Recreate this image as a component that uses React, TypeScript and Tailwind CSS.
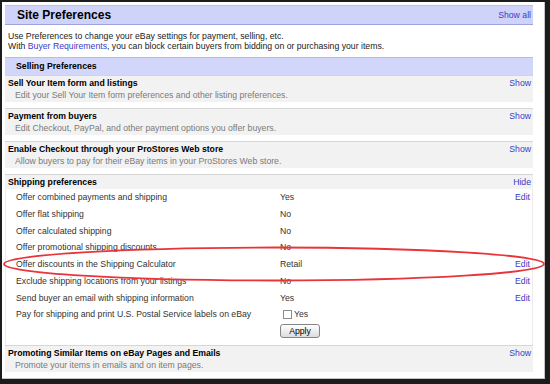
import React from "react";

const LINK = "text-[#3b3bc6]";

function Section({ title, desc, first }: { title: string; desc: string; first?: boolean }) {
  return (
    <div className={first ? "" : "mt-[6px] border-t border-[#d6d6d6]"}>
      <div className="bg-[#f2f2f2] py-[1px]">
        <div className="flex h-[12px] items-center justify-between pl-[3px] pr-[2px]">
          <span className="font-bold text-black">{title}</span>
          <span className={LINK}>Show</span>
        </div>
        <div className="flex h-[12px] items-center pl-[10px] text-[#7a7a7a]">{desc}</div>
      </div>
    </div>
  );
}

const rows: { label: string; value: string; edit: boolean }[] = [
  { label: "Offer combined payments and shipping", value: "Yes", edit: true },
  { label: "Offer flat shipping", value: "No", edit: false },
  { label: "Offer calculated shipping", value: "No", edit: false },
  { label: "Offer promotional shipping discounts", value: "No", edit: false },
  { label: "Offer discounts in the Shipping Calculator", value: "Retail", edit: true },
  { label: "Exclude shipping locations from your listings", value: "No", edit: true },
  { label: "Send buyer an email with shipping information", value: "Yes", edit: true },
];

export default function App() {
  return (
    <div
      className="h-[384px] w-[550px] bg-[#1c1c1c] pb-[5px] pl-[2px] pr-[5px] pt-[2px] text-[8.7px] leading-none"
      style={{ fontFamily: '"Liberation Sans", Arial, sans-serif' }}
    >
      <div className="relative h-full border-b border-r border-[#c4c4c4] bg-white pl-[3px] pr-[10px] pt-[3px]">
        <div className="w-[528px]">
          {/* Header */}
          <div className="flex h-[20px] items-center justify-between border-b border-t border-b-[#9ea4dc] border-t-[#bcc1ea] bg-[#cfd3fa] pl-[12px] pr-[2px]">
            <span className="text-[12px] font-bold text-black">Site Preferences</span>
            <span className={LINK}>Show all</span>
          </div>

          {/* Intro */}
          <div className="mt-[6px] pl-[3px] text-[#222]">
            <div className="flex h-[10px] items-center">
              Use Preferences to change your eBay settings for payment, selling, etc.
            </div>
            <div className="flex h-[10px] items-center">
              <span>With&nbsp;</span>
              <span className={LINK}>Buyer Requirements</span>
              <span>, you can block certain buyers from bidding on or purchasing your items.</span>
            </div>
          </div>

          {/* Selling Preferences bar */}
          <div className="mt-[6px] flex h-[19px] items-center border-b border-t border-b-[#f3d77c] border-t-[#b9bdd6] bg-[#d2d6fa] pl-[11px]">
            <span className="font-bold text-black">Selling Preferences</span>
          </div>

          <Section
            first
            title="Sell Your Item form and listings"
            desc="Edit your Sell Your Item form preferences and other listing preferences."
          />
          <Section
            title="Payment from buyers"
            desc="Edit Checkout, PayPal, and other payment options you offer buyers."
          />
          <Section
            title="Enable Checkout through your ProStores Web store"
            desc="Allow buyers to pay for their eBay items in your ProStores Web store."
          />

          {/* Shipping preferences */}
          <div className="mt-[6px] border-t border-[#d6d6d6]">
            <div className="flex h-[14px] items-center justify-between bg-[#f2f2f2] pl-[3px] pr-[2px] pt-[1px]">
              <span className="font-bold text-black">Shipping preferences</span>
              <span className={LINK}>Hide</span>
            </div>
            <div className="border-l border-r border-[#ececec] pb-[7px] text-[#333]">
              {rows.map((r) => (
                <div key={r.label} className="flex h-[16.75px] items-center">
                  <div className="w-[274px] pl-[10px]">{r.label}</div>
                  <div className="flex-1">{r.value}</div>
                  {r.edit && <div className={`pr-[2px] ${LINK}`}>Edit</div>}
                </div>
              ))}
              <div className="flex items-start">
                <div className="flex h-[16.75px] w-[274px] items-center pl-[10px]">
                  Pay for shipping and print U.S. Postal Service labels on eBay
                </div>
                <div className="flex-1">
                  <div className="flex h-[16.75px] items-center">
                    <span className="ml-[3px] inline-block h-[9px] w-[9px] border border-[#8c8c8c] bg-white" />
                    <span className="ml-[2px]">Yes</span>
                  </div>
                  <button className="mt-[1px] flex h-[14px] w-[40px] items-center justify-center rounded-[3px] border border-[#858585] bg-gradient-to-b from-white to-[#dcdcdc] text-[8.7px] text-black">
                    Apply
                  </button>
                </div>
              </div>
            </div>
          </div>

          <div className="border-t border-[#d6d6d6]">
            <div className="bg-[#f2f2f2] py-[1px]">
              <div className="flex h-[12px] items-center justify-between pl-[3px] pr-[2px]">
                <span className="font-bold text-black">Promoting Similar Items on eBay Pages and Emails</span>
                <span className={LINK}>Show</span>
              </div>
              <div className="flex h-[12px] items-center pl-[10px] text-[#7a7a7a]">
                Promote your items in emails and on item pages.
              </div>
            </div>
          </div>
        </div>

        {/* red annotation ellipse */}
        <svg className="pointer-events-none absolute left-0 top-0" width="548" height="377">
          <ellipse cx="272" cy="262" rx="270" ry="16.5" fill="none" stroke="#e8353b" strokeWidth="1.8" />
        </svg>
      </div>
    </div>
  );
}
